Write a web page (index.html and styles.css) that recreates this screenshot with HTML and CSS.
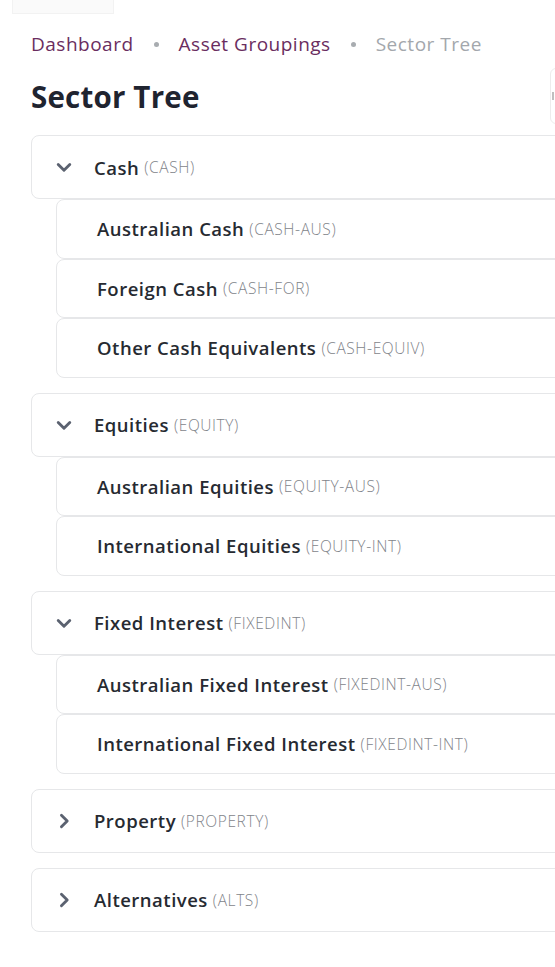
FILE: index.html
```html
<!DOCTYPE html>
<html lang="en">
<head>
<meta charset="utf-8">
<title>Sector Tree</title>
<link rel="stylesheet" href="styles.css">
</head>
<body>
<div class="topstub"></div>
<div class="page">
  <nav class="crumbs">
    <a class="crumb" href="#">Dashboard</a>
    <span class="dot"></span>
    <a class="crumb" href="#">Asset Groupings</a>
    <span class="dot"></span>
    <span class="crumb current">Sector Tree</span>
  </nav>
  <div class="header">
    <h1 class="title">Sector Tree</h1>
    <div class="action"><span class="action-mark"></span></div>
  </div>
  <div class="tree">
    <div class="group">
      <div class="parent">
        <svg class="chev" viewBox="0 0 14 14"><path d="M2.5 5 L7 9.5 L11.5 5"/></svg>
        <span class="name">Cash</span><span class="code">(CASH)</span>
      </div>
      <div class="children">
        <div class="child"><span class="name">Australian Cash</span><span class="code">(CASH-AUS)</span></div>
        <div class="child"><span class="name">Foreign Cash</span><span class="code">(CASH-FOR)</span></div>
        <div class="child"><span class="name">Other Cash Equivalents</span><span class="code">(CASH-EQUIV)</span></div>
      </div>
    </div>
    <div class="group">
      <div class="parent">
        <svg class="chev" viewBox="0 0 14 14"><path d="M2.5 5 L7 9.5 L11.5 5"/></svg>
        <span class="name">Equities</span><span class="code">(EQUITY)</span>
      </div>
      <div class="children">
        <div class="child"><span class="name">Australian Equities</span><span class="code">(EQUITY-AUS)</span></div>
        <div class="child"><span class="name">International Equities</span><span class="code">(EQUITY-INT)</span></div>
      </div>
    </div>
    <div class="group">
      <div class="parent">
        <svg class="chev" viewBox="0 0 14 14"><path d="M2.5 5 L7 9.5 L11.5 5"/></svg>
        <span class="name">Fixed Interest</span><span class="code">(FIXEDINT)</span>
      </div>
      <div class="children">
        <div class="child"><span class="name">Australian Fixed Interest</span><span class="code">(FIXEDINT-AUS)</span></div>
        <div class="child"><span class="name">International Fixed Interest</span><span class="code">(FIXEDINT-INT)</span></div>
      </div>
    </div>
    <div class="group">
      <div class="parent">
        <svg class="chev" viewBox="0 0 14 14"><path d="M5 2.5 L9.5 7 L5 11.5"/></svg>
        <span class="name">Property</span><span class="code">(PROPERTY)</span>
      </div>
    </div>
    <div class="group">
      <div class="parent">
        <svg class="chev" viewBox="0 0 14 14"><path d="M5 2.5 L9.5 7 L5 11.5"/></svg>
        <span class="name">Alternatives</span><span class="code">(ALTS)</span>
      </div>
    </div>
  </div>
</div>
</body>
</html>
```
FILE: styles.css
```css
html, body {
  margin: 0;
  padding: 0;
  background: #ffffff;
  overflow: hidden;
}
body {
  font-family: "Open Sans", "Noto Sans", sans-serif;
  color: #23272e;
  width: 555px;
}
.topstub {
  margin-left: 12px;
  width: 100px;
  height: 13px;
  background: #fafafa;
  border: 1px solid #f2f2f2;
  border-top: none;
}
.page {
  width: 640px;
  padding-left: 31px;
  box-sizing: border-box;
}
.crumbs {
  display: flex;
  align-items: center;
  gap: 20px;
  margin-top: 17px;
  height: 26px;
  font-size: 19px;
  letter-spacing: 0.5px;
}
.crumb {
  color: #6a2d60;
  text-decoration: none;
}
.crumb.current {
  color: #a3a7ac;
}
.dot {
  width: 5px;
  height: 5px;
  border-radius: 50%;
  background: #a8acb0;
}
.header {
  display: flex;
  align-items: center;
  justify-content: space-between;
  width: 600px;
  margin-top: 16px;
  height: 46px;
}
.title {
  margin: 0;
  font-size: 29.5px;
  letter-spacing: 0.2px;
  font-weight: 700;
  color: #1f2430;
}
.action {
  width: 79px;
  height: 54px;
  border: 1px solid #ececec;
  border-radius: 6px;
  display: flex;
  align-items: center;
}
.action-mark {
  width: 2px;
  height: 8px;
  margin-left: 1px;
  background: #bfbfbf;
}
.tree {
  display: flex;
  flex-direction: column;
  gap: 15px;
  margin-top: 16px;
}
.parent, .child {
  display: flex;
  align-items: center;
  box-sizing: border-box;
  border: 1px solid #e6e7e9;
  border-radius: 8px;
  background: #ffffff;
  font-size: 18.5px;
}
.parent {
  height: 64px;
  padding-left: 23px;
}
.children {
  margin-left: 25px;
  display: flex;
  flex-direction: column;
}
.child {
  height: 59.5px;
  padding-left: 40px;
}
.chev {
  width: 18px;
  height: 18px;
  margin-right: 21px;
  fill: none;
  stroke: #5b6270;
  stroke-width: 2.2;
  stroke-linecap: round;
  stroke-linejoin: round;
}
.name {
  font-weight: 600;
  letter-spacing: 0.5px;
  color: #262a31;
}
.code {
  margin-left: 5px;
  font-size: 15.5px;
  letter-spacing: 0.6px;
  color: #7f848a;
  font-weight: 300;
}
```
